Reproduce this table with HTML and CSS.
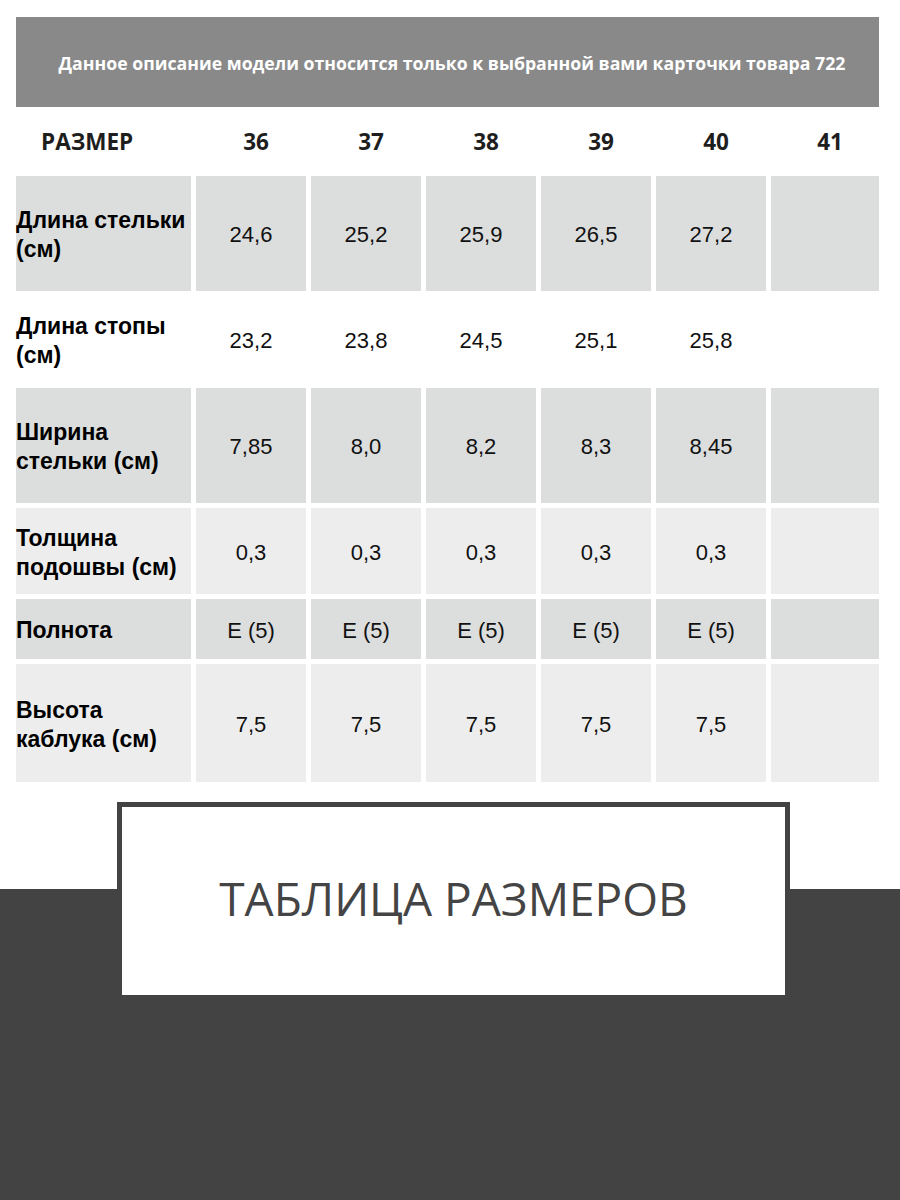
FILE: index.html
```html
<!DOCTYPE html>
<html lang="ru">
<head>
<meta charset="utf-8">
<title>Таблица размеров</title>
<link rel="stylesheet" href="styles.css">
</head>
<body>
<div class="page">
  <div class="notice">Данное описание модели относится только к выбранной вами карточки товара 722</div>
  <div class="sizes">
    <div class="sizes-label">РАЗМЕР</div>
    <div class="sizes-num">36</div>
    <div class="sizes-num">37</div>
    <div class="sizes-num">38</div>
    <div class="sizes-num">39</div>
    <div class="sizes-num">40</div>
    <div class="sizes-num">41</div>
  </div>
  <div class="grid">
    <div class="lbl dark">Длина стельки<br>(см)</div>
    <div class="val dark">24,6</div>
    <div class="val dark">25,2</div>
    <div class="val dark">25,9</div>
    <div class="val dark">26,5</div>
    <div class="val dark">27,2</div>
    <div class="val dark"></div>

    <div class="lbl">Длина стопы<br>(см)</div>
    <div class="val">23,2</div>
    <div class="val">23,8</div>
    <div class="val">24,5</div>
    <div class="val">25,1</div>
    <div class="val">25,8</div>
    <div class="val"></div>

    <div class="lbl dark">Ширина<br>стельки (см)</div>
    <div class="val dark">7,85</div>
    <div class="val dark">8,0</div>
    <div class="val dark">8,2</div>
    <div class="val dark">8,3</div>
    <div class="val dark">8,45</div>
    <div class="val dark"></div>

    <div class="lbl light">Толщина<br>подошвы (см)</div>
    <div class="val light">0,3</div>
    <div class="val light">0,3</div>
    <div class="val light">0,3</div>
    <div class="val light">0,3</div>
    <div class="val light">0,3</div>
    <div class="val light"></div>

    <div class="lbl dark">Полнота</div>
    <div class="val dark">E (5)</div>
    <div class="val dark">E (5)</div>
    <div class="val dark">E (5)</div>
    <div class="val dark">E (5)</div>
    <div class="val dark">E (5)</div>
    <div class="val dark"></div>

    <div class="lbl light">Высота<br>каблука (см)</div>
    <div class="val light">7,5</div>
    <div class="val light">7,5</div>
    <div class="val light">7,5</div>
    <div class="val light">7,5</div>
    <div class="val light">7,5</div>
    <div class="val light"></div>
  </div>
</div>
<div class="footer">
  <div class="title-box">ТАБЛИЦА РАЗМЕРОВ</div>
</div>
</body>
</html>
```
FILE: styles.css
```css
html, body {
  margin: 0;
  padding: 0;
  background: #ffffff;
}

.page {
  padding: 17px 21px 0 16px;
}

.notice {
  height: 90px;
  background: #898989;
  color: #ffffff;
  font-family: "Open Sans", "DejaVu Sans", sans-serif;
  font-weight: 700;
  font-size: 17.7px;
  display: flex;
  align-items: center;
  justify-content: center;
  padding-left: 9px;
  padding-top: 2px;
  box-sizing: border-box;
}

.sizes {
  height: 69px;
  display: grid;
  grid-template-columns: 175px repeat(5, 110px) 108px;
  column-gap: 5px;
  align-items: center;
  font-family: "Open Sans", "DejaVu Sans", sans-serif;
  font-weight: 700;
  font-size: 22.5px;
  color: #1e1e1e;
}

.sizes-label {
  padding-left: 25px;
}

.sizes-num {
  text-align: center;
  padding-left: 10px;
}

.grid {
  display: grid;
  grid-template-columns: 175px repeat(5, 110px) 108px;
  grid-template-rows: 115px 87px 115px 86px 60px 118px;
  gap: 5px;
}

.lbl {
  display: flex;
  align-items: center;
  font-family: "Liberation Sans", Arial, sans-serif;
  font-weight: 700;
  font-size: 23px;
  line-height: 29px;
  color: #000000;
  white-space: nowrap;
  padding-top: 3px;
}

.val {
  display: flex;
  align-items: center;
  justify-content: center;
  font-family: "Liberation Sans", Arial, sans-serif;
  font-size: 22px;
  color: #111111;
  padding-top: 3px;
}

.dark {
  background: #dcdddd;
}

.light {
  background: #ededed;
}

.footer {
  margin-top: 20px;
  height: 398px;
  background: linear-gradient(to bottom, #ffffff 0, #ffffff 87px, #434343 87px, #434343 100%);
}

.title-box {
  margin-left: 117px;
  width: 673px;
  height: 193px;
  box-sizing: border-box;
  border: 5px solid #434343;
  border-bottom: 0;
  background: #ffffff;
  display: flex;
  align-items: center;
  justify-content: center;
  font-family: "Open Sans", "DejaVu Sans", sans-serif;
  font-weight: 400;
  font-size: 46px;
  color: #444444;
  padding-bottom: 7px;
}
```
